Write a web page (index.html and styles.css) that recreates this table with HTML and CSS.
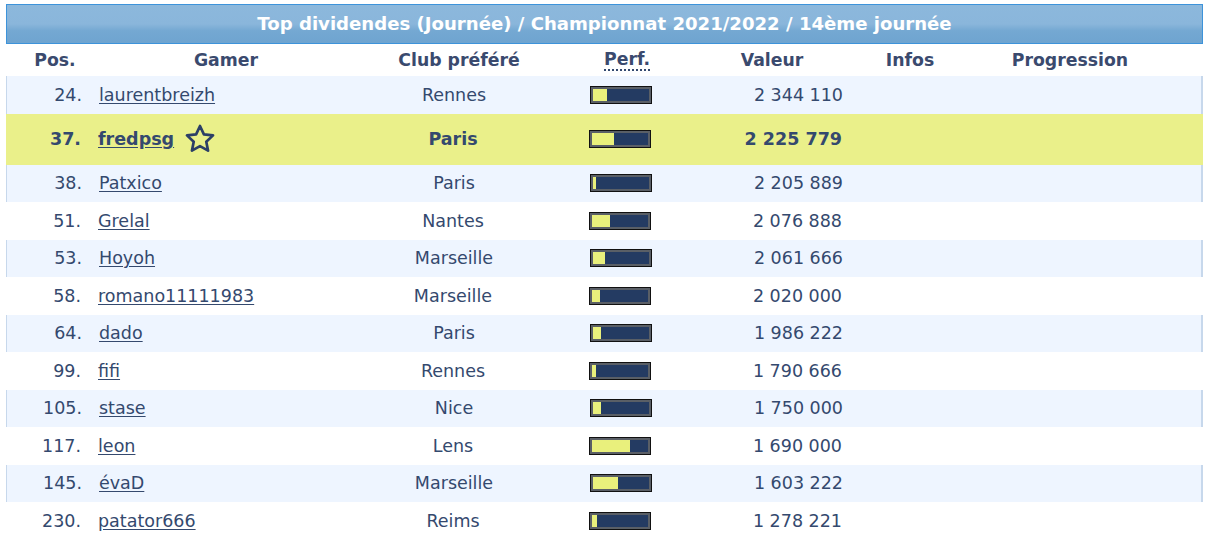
FILE: index.html
```html
<!DOCTYPE html>
<html lang="fr">
<head>
<meta charset="utf-8">
<title>Top dividendes</title>
<link rel="stylesheet" href="styles.css">
</head>
<body>
<div class="board">
  <div class="title">Top dividendes (Journée) / Championnat 2021/2022 / 14ème journée</div>
  <div class="row head">
    <div class="c-pos">Pos.</div>
    <div class="c-gamer">Gamer</div>
    <div class="c-club">Club préféré</div>
    <div class="c-perf"><abbr title="Performance">Perf.</abbr></div>
    <div class="c-val">Valeur</div>
    <div class="c-info">Infos</div>
    <div class="c-prog">Progression</div>
    <div></div>
  </div>

  <div class="row odd">
    <div class="c-pos">24.</div>
    <div class="c-gamer"><a href="#">laurentbreizh</a></div>
    <div class="c-club">Rennes</div>
    <div class="c-perf"><span class="bar"><span class="fill" style="width:25%"></span></span></div>
    <div class="c-val">2 344 110</div>
    <div class="c-info"></div><div class="c-prog"></div><div></div>
  </div>

  <div class="row me">
    <div class="c-pos">37.</div>
    <div class="c-gamer"><a href="#">fredpsg</a>
      <svg class="star" viewBox="0 0 24 24" width="34" height="34"><path d="M12 2.8l2.75 5.9 6.45.75-4.77 4.42 1.27 6.38L12 17.05l-5.7 3.2 1.27-6.38L2.8 9.45l6.45-.75z" fill="none" stroke="#2c3f66" stroke-width="1.9" stroke-linejoin="round"/></svg>
    </div>
    <div class="c-club">Paris</div>
    <div class="c-perf"><span class="bar"><span class="fill" style="width:39%"></span></span></div>
    <div class="c-val">2 225 779</div>
    <div class="c-info"></div><div class="c-prog"></div><div></div>
  </div>

  <div class="row odd">
    <div class="c-pos">38.</div>
    <div class="c-gamer"><a href="#">Patxico</a></div>
    <div class="c-club">Paris</div>
    <div class="c-perf"><span class="bar"><span class="fill" style="width:6%"></span></span></div>
    <div class="c-val">2 205 889</div>
    <div class="c-info"></div><div class="c-prog"></div><div></div>
  </div>

  <div class="row">
    <div class="c-pos">51.</div>
    <div class="c-gamer"><a href="#">Grelal</a></div>
    <div class="c-club">Nantes</div>
    <div class="c-perf"><span class="bar"><span class="fill" style="width:33%"></span></span></div>
    <div class="c-val">2 076 888</div>
    <div class="c-info"></div><div class="c-prog"></div><div></div>
  </div>

  <div class="row odd">
    <div class="c-pos">53.</div>
    <div class="c-gamer"><a href="#">Hoyoh</a></div>
    <div class="c-club">Marseille</div>
    <div class="c-perf"><span class="bar"><span class="fill" style="width:22%"></span></span></div>
    <div class="c-val">2 061 666</div>
    <div class="c-info"></div><div class="c-prog"></div><div></div>
  </div>

  <div class="row">
    <div class="c-pos">58.</div>
    <div class="c-gamer"><a href="#">romano11111983</a></div>
    <div class="c-club">Marseille</div>
    <div class="c-perf"><span class="bar"><span class="fill" style="width:14%"></span></span></div>
    <div class="c-val">2 020 000</div>
    <div class="c-info"></div><div class="c-prog"></div><div></div>
  </div>

  <div class="row odd">
    <div class="c-pos">64.</div>
    <div class="c-gamer"><a href="#">dado</a></div>
    <div class="c-club">Paris</div>
    <div class="c-perf"><span class="bar"><span class="fill" style="width:14%"></span></span></div>
    <div class="c-val">1 986 222</div>
    <div class="c-info"></div><div class="c-prog"></div><div></div>
  </div>

  <div class="row">
    <div class="c-pos">99.</div>
    <div class="c-gamer"><a href="#">fifi</a></div>
    <div class="c-club">Rennes</div>
    <div class="c-perf"><span class="bar"><span class="fill" style="width:7%"></span></span></div>
    <div class="c-val">1 790 666</div>
    <div class="c-info"></div><div class="c-prog"></div><div></div>
  </div>

  <div class="row odd">
    <div class="c-pos">105.</div>
    <div class="c-gamer"><a href="#">stase</a></div>
    <div class="c-club">Nice</div>
    <div class="c-perf"><span class="bar"><span class="fill" style="width:14%"></span></span></div>
    <div class="c-val">1 750 000</div>
    <div class="c-info"></div><div class="c-prog"></div><div></div>
  </div>

  <div class="row">
    <div class="c-pos">117.</div>
    <div class="c-gamer"><a href="#">leon</a></div>
    <div class="c-club">Lens</div>
    <div class="c-perf"><span class="bar"><span class="fill" style="width:67%"></span></span></div>
    <div class="c-val">1 690 000</div>
    <div class="c-info"></div><div class="c-prog"></div><div></div>
  </div>

  <div class="row odd">
    <div class="c-pos">145.</div>
    <div class="c-gamer"><a href="#">évaD</a></div>
    <div class="c-club">Marseille</div>
    <div class="c-perf"><span class="bar"><span class="fill" style="width:45%"></span></span></div>
    <div class="c-val">1 603 222</div>
    <div class="c-info"></div><div class="c-prog"></div><div></div>
  </div>

  <div class="row">
    <div class="c-pos">230.</div>
    <div class="c-gamer"><a href="#">patator666</a></div>
    <div class="c-club">Reims</div>
    <div class="c-perf"><span class="bar"><span class="fill" style="width:9%"></span></span></div>
    <div class="c-val">1 278 221</div>
    <div class="c-info"></div><div class="c-prog"></div><div></div>
  </div>
</div>
</body>
</html>
```

FILE: styles.css
```css
html, body {
  margin: 0;
  padding: 0;
  background: #ffffff;
}

body {
  padding: 4px 6px 0 6px;
  font-family: "DejaVu Sans", Verdana, sans-serif;
  font-size: 17.5px;
  color: #34496e;
}

.board {
  width: 1197px;
}

.title {
  height: 40px;
  box-sizing: border-box;
  border: 1px solid #3d93da;
  background: linear-gradient(#8cb8dc 0%, #8ab6db 50%, #74a8d2 68%, #6fa4d0 100%);
  color: #ffffff;
  font-weight: bold;
  font-size: 18.1px;
  display: flex;
  align-items: center;
  justify-content: center;
  padding-bottom: 1px;
}

.row {
  display: grid;
  grid-template-columns: 86px 268px 198px 138px 152px 124px 196px 35px;
  align-items: center;
  height: 37.5px;
  box-sizing: border-box;
}

.row.head {
  height: 32px;
  font-weight: bold;
  color: #3a4a6e;
  font-size: 17.3px;
}

.row.odd {
  background: #eef5ff;
  border-left: 1px solid #c7d8ec;
  border-right: 2px solid #c7d8ec;
}

.row.me {
  background: #eaf08a;
  height: 51px;
  font-weight: bold;
}

.c-pos {
  text-align: right;
  padding-right: 11px;
}

.head .c-pos {
  text-align: center;
  padding-right: 0;
  padding-left: 12px;
}

.c-gamer {
  padding-left: 6px;
  display: flex;
  align-items: center;
}

.head .c-gamer {
  justify-content: center;
  padding-left: 0;
}

.c-gamer a {
  color: #34496e;
  text-decoration: underline;
  text-underline-offset: 2px;
}

.star {
  margin-left: 9px;
  margin-top: -1px;
}

.c-club {
  text-align: center;
  padding-right: 12px;
}

.head .c-club {
  padding-right: 0;
}

.c-perf {
  padding-left: 31px;
  display: flex;
  align-items: center;
}

.head .c-perf {
  padding-left: 46px;
}

.c-perf abbr {
  text-decoration: none;
  border-bottom: 2px dotted #34496e;
  line-height: 19px;
}

.bar {
  display: block;
  width: 62px;
  height: 18px;
  box-sizing: border-box;
  border: 1px solid #111111;
  background: #243b62;
  box-shadow: inset 0 0 0 2px #5a5f66;
  padding: 2px;
  overflow: hidden;
}

.fill {
  display: block;
  height: 100%;
  background: #e9f07c;
}

.c-val {
  text-align: right;
  padding-right: 6px;
}

.head .c-val,
.head .c-info,
.head .c-prog {
  text-align: center;
  padding-right: 0;
}
```
